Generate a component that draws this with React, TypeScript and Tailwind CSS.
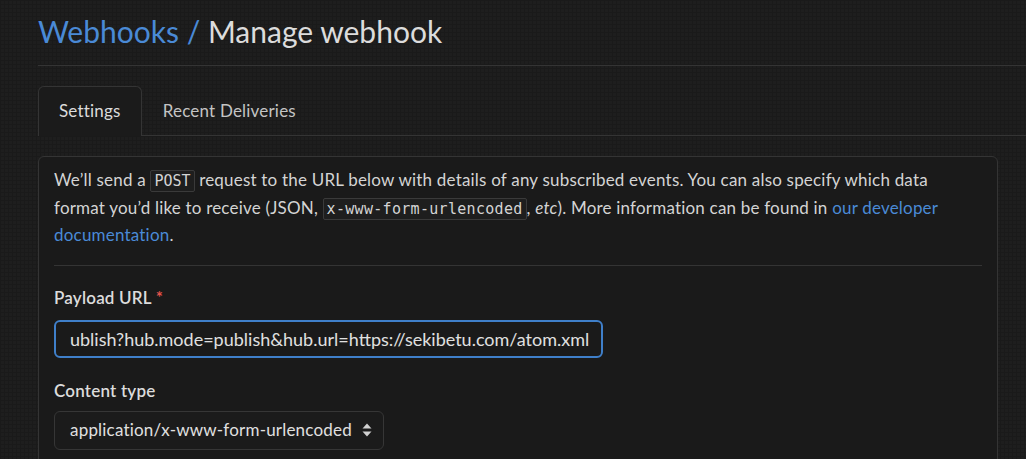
import React from "react";

function UpDown() {
  return (
    <svg width="10" height="16" viewBox="0 0 10 16" className="ml-[10px]">
      <path d="M5 1.5 L9.5 6.5 H0.5 Z" fill="#d0d0d0" />
      <path d="M5 14.5 L9.5 9.5 H0.5 Z" fill="#d0d0d0" />
    </svg>
  );
}

export default function App() {
  return (
    <div className="min-h-screen w-full overflow-hidden bg-[#1e1e1e] bg-[image:linear-gradient(to_right,#1a1a1a_1px,transparent_1px),linear-gradient(to_bottom,#1a1a1a_1px,transparent_1px)] bg-[size:4px_4px] font-['Lato','Noto_Sans',sans-serif] text-[17px] leading-[26.5px] tracking-[0.2px] text-[#d4d4d4]">
      <div className="pl-[38px]">
        <h1 className="border-b border-[#343434] pt-[13px] pb-[15px] text-[30px] leading-[37px] font-normal tracking-normal">
          <span className="text-[#4a8ad6]">Webhooks /</span>{" "}
          <span className="text-[#dcdcdc]">Manage webhook</span>
        </h1>

        <div className="mt-[20px] flex border-b border-[#343434]">
          <div className="-mb-px flex h-[50px] items-center rounded-t-[6px] border border-b-0 border-[#343434] bg-[#1b1b1b] px-[20px] text-[#dcdcdc]">
            Settings
          </div>
          <div className="-mb-px flex h-[50px] items-center border border-transparent px-[20px] text-[#c4c4c4]">
            Recent Deliveries
          </div>
        </div>

        <div className="mt-[20px] w-[960px] rounded-[6px] border border-[#343434] bg-[#1a1a1a] px-[15px] pt-[10px] pb-[40px]">
          <p>
            We’ll send a{" "}
            <code className="rounded-[2px] border border-[#3a3a3a] bg-[#1e1e1e] px-[3px] py-[1px] font-['DejaVu_Sans_Mono',monospace] text-[15px] tracking-normal text-[#d4d4d4]">
              POST
            </code>{" "}
            request to the URL below with details of any subscribed events. You can also specify which data
            <br />
            format you’d like to receive (JSON,{" "}
            <code className="rounded-[2px] border border-[#3a3a3a] bg-[#1e1e1e] px-[3px] py-[1px] font-['DejaVu_Sans_Mono',monospace] text-[15px] tracking-[0.3px] text-[#d4d4d4]">
              x-www-form-urlencoded
            </code>
            , <em>etc</em>). More information can be found in{" "}
            <span className="text-[#4a8ad6]">our developer</span>
            <br />
            <span className="text-[#4a8ad6]">documentation</span>.
          </p>

          <div className="mt-[16px] border-t border-[#343434]" />

          <div className="mt-[19px] font-semibold text-[#dcdcdc]">
            Payload URL <span className="text-[#e5534b]">*</span>
          </div>
          <div className="mt-[9px] flex h-[38px] w-[549px] items-center rounded-[6px] border-2 border-[#3f7fc9] bg-[#1a1a1a] pl-[14px] text-[18px] tracking-normal text-[#e0e0e0]">
            ublish?hub.mode=publish&amp;hub.url=https://sekibetu.com/atom.xml
          </div>

          <div className="mt-[20px] font-semibold text-[#dcdcdc]">Content type</div>
          <div className="mt-[6px] flex h-[39px] w-[330px] items-center rounded-[6px] border border-[#363636] bg-[#1b1b1b] pl-[15px] text-[#e0e0e0]">
            application/x-www-form-urlencoded
            <UpDown />
          </div>
        </div>
      </div>
    </div>
  );
}
